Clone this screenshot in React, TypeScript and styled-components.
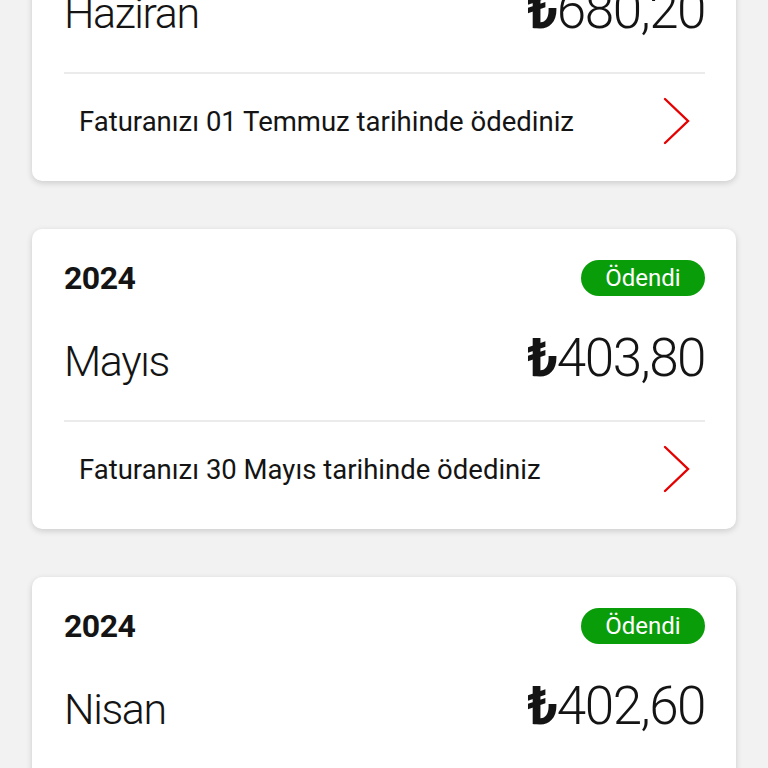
import React from "react";
import styled, { createGlobalStyle } from "styled-components";

const GlobalStyle = createGlobalStyle`
  html, body {
    margin: 0;
    padding: 0;
    background: #f2f2f2;
    font-family: Roboto, "Liberation Sans", sans-serif;
    color: #141414;
    overflow: hidden;
  }
`;

const bills = [
  { year: "2024", month: "Haziran", amount: "680,20", paidOn: "01 Temmuz" },
  { year: "2024", month: "Mayıs", amount: "403,80", paidOn: "30 Mayıs" },
  { year: "2024", month: "Nisan", amount: "402,60", paidOn: "30 Nisan" },
];

function Chevron() {
  return (
    <svg width="28" height="48" viewBox="0 0 28 48" fill="none">
      <polyline
        points="2,2 25,24 2,46"
        stroke="#e60000"
        strokeWidth="2.4"
        strokeLinecap="round"
        strokeLinejoin="miter"
      />
    </svg>
  );
}

function BillCard({ bill }) {
  return (
    <Card>
      <Header>
        <Year>{bill.year}</Year>
        <Badge>Ödendi</Badge>
      </Header>
      <MonthRow>
        <Month>{bill.month}</Month>
        <Amount>
          <Lira>₺</Lira>
          {bill.amount}
        </Amount>
      </MonthRow>
      <Divider />
      <Footer>
        <FooterText>Faturanızı {bill.paidOn} tarihinde ödediniz</FooterText>
        <Chevron />
      </Footer>
    </Card>
  );
}

export default function App() {
  return (
    <>
      <GlobalStyle />
      <List>
        {bills.map((b) => (
          <BillCard key={b.month} bill={b} />
        ))}
      </List>
    </>
  );
}

const List = styled.div`
  display: flex;
  flex-direction: column;
  gap: 48px;
  margin-top: -119px;
  padding: 0 32px;
`;

const Card = styled.div`
  background: #fff;
  border-radius: 10px;
  box-shadow: 0 2px 6px rgba(0, 0, 0, 0.16);
  padding: 31px 31px 0 32px;
`;

const Header = styled.div`
  display: flex;
  justify-content: space-between;
  align-items: center;
  height: 36px;
`;

const Year = styled.div`
  font-size: 32px;
  font-weight: 700;
  letter-spacing: -0.5px;
`;

const Badge = styled.div`
  background: #0a9d0a;
  color: #fff;
  border-radius: 18px;
  height: 36px;
  width: 124px;
  display: flex;
  align-items: center;
  justify-content: center;
  font-size: 24px;
  font-weight: 400;
`;

const MonthRow = styled.div`
  display: flex;
  justify-content: space-between;
  align-items: baseline;
  height: 50px;
  margin-top: 37px;
`;

const Month = styled.div`
  font-size: 43px;
  font-weight: 300;
  letter-spacing: -1.4px;
  line-height: 50px;
`;

const Amount = styled.div`
  font-size: 53px;
  font-weight: 300;
  letter-spacing: -1.5px;
  line-height: 50px;
`;

const Lira = styled.span`
  font-weight: 700;
`;

const Divider = styled.div`
  height: 2px;
  background: #ebebeb;
  margin-top: 37px;
`;

const Footer = styled.div`
  display: flex;
  justify-content: space-between;
  align-items: center;
  height: 50px;
  padding: 22px 14px 35px 15px;
`;

const FooterText = styled.div`
  font-size: 27.5px;
  letter-spacing: 0;
`;
